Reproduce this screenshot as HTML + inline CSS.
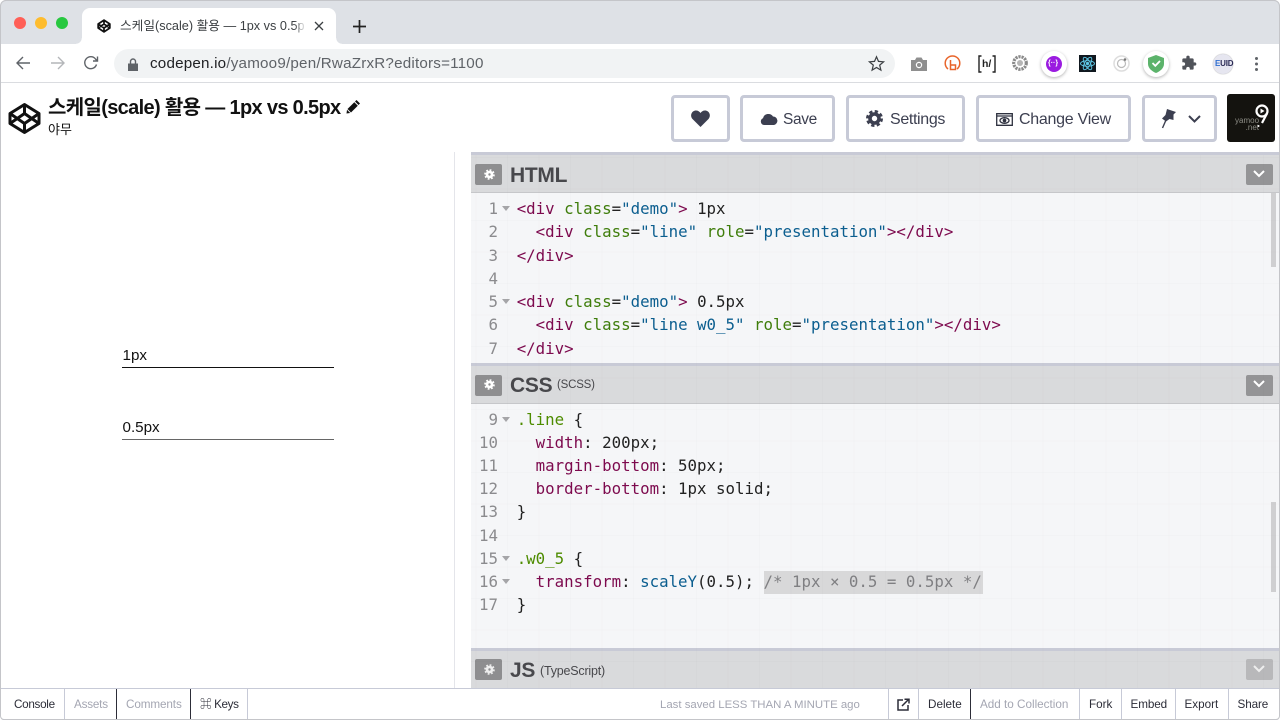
<!DOCTYPE html>
<html><head><meta charset="utf-8">
<style>
*{box-sizing:border-box}
html,body{margin:0;padding:0;width:1280px;height:720px;overflow:hidden;background:#fff}
body{font-family:"Liberation Sans","Noto Sans CJK KR",sans-serif;position:relative;color:#1c1c20}
.a{position:absolute;white-space:pre}
.ico{position:absolute;overflow:visible}
.btn{position:absolute;top:95px;height:47px;border:3px solid #c7cad7;border-radius:4px;background:#fff;color:#3c3f50;font-size:16px;line-height:43px}
.btn span{position:absolute;top:0;white-space:pre}
.ph{position:absolute;left:471px;width:809px;background:#d9dadc;border-top:3px solid #c8cad6;border-bottom:1px solid #c6c7ca}
.cb{position:absolute;left:471px;width:809px;background:#f5f6f8}
.gear{position:absolute;left:4px;width:27px;height:21px;background:#8e8e90;border-radius:2px}
.chev{position:absolute;left:775px;width:27px;height:21px;background:#949496;border-radius:2px}
.pt{position:absolute;left:39px;font-weight:bold;color:#48484c;font-size:21px;letter-spacing:-.3px}
.c{position:absolute;font-family:"DejaVu Sans Mono",monospace;font-size:15.77px;white-space:pre;line-height:23px;color:#222}
.n{color:#8b8b8e;position:absolute;text-align:right;width:28px;left:470px;font-family:"DejaVu Sans Mono",monospace;font-size:15.8px;line-height:23px}
.t{color:#7d0a4e}.g{color:#3f7d0b}.b{color:#0b5e8f}.l{color:#4e8c00}
.f{position:absolute;width:0;height:0;border-left:4px solid transparent;border-right:4px solid transparent;border-top:5px solid #a5a5a8;left:502px}
.ft{position:absolute;top:689px;height:32px;line-height:32px;font-size:11.7px;color:#2c2d38;white-space:pre}
.m{color:#a4a6b2}
.sep{position:absolute;top:689px;width:1px;height:31px;background:#c7cad7}
</style></head><body>

<!-- browser chrome -->
<div class="a" style="left:0;top:0;width:1280px;height:44px;background:#dee1e6;border-top:1px solid #b9babd"></div>
<div class="a" style="left:82px;top:8px;width:254px;height:36px;background:#fff;border-radius:8px 8px 0 0"></div>
<div class="a" style="left:76px;top:38px;width:6px;height:6px;background:radial-gradient(circle at 0 0,#dee1e6 5.500px,#fff 6px)"></div>
<div class="a" style="left:336px;top:38px;width:6px;height:6px;background:radial-gradient(circle at 100% 0,#dee1e6 5.500px,#fff 6px)"></div>
<div class="a" style="left:14px;top:17px;width:12px;height:12px;border-radius:50%;background:#ff5f57"></div>
<div class="a" style="left:35px;top:17px;width:12px;height:12px;border-radius:50%;background:#febc2e"></div>
<div class="a" style="left:56px;top:17px;width:12px;height:12px;border-radius:50%;background:#28c840"></div>
<svg class="ico" style="left:97px;top:19px" width="14" height="14" viewBox="0 0 24 24" fill="none" stroke="#111" stroke-width="3" stroke-linejoin="round"><path d="M12 2 22 8.500V15.500L12 22 2 15.500V8.500ZM12 2V8.500M12 15.500V22M2 8.500 12 15.500 22 8.500M2 15.500 12 8.500 22 15.500"/></svg>
<div class="a" style="left:120px;top:18px;width:186px;overflow:hidden;font-size:12.7px;line-height:16px;color:#3c4043">스케일(scale) 활용 — 1px vs 0.5p</div>
<div class="a" style="left:294px;top:18px;width:12px;height:16px;background:linear-gradient(90deg,rgba(255,255,255,0),#fff)"></div>
<svg class="ico" style="left:314px;top:21px" width="10" height="10" viewBox="0 0 10 10" stroke="#3c4043" stroke-width="1.300"><path d="M1 1 9 9M9 1 1 9"/></svg>
<svg class="ico" style="left:353px;top:20px" width="13" height="13" viewBox="0 0 13 13" stroke="#222" stroke-width="1.700"><path d="M6.500 0V13M0 6.500H13"/></svg>
<div class="a" style="left:0;top:44px;width:1280px;height:39px;background:#fff;border-bottom:1px solid #dadce0"></div>
<svg class="ico" style="left:15px;top:55px" width="16" height="16" viewBox="0 0 16 16" fill="none" stroke="#5f6368" stroke-width="1.400"><path d="M15 8H2M8 2 2 8 8 14"/></svg>
<svg class="ico" style="left:50px;top:55px" width="16" height="16" viewBox="0 0 16 16" fill="none" stroke="#b4b6b9" stroke-width="1.400"><path d="M1 8H14M8 2 14 8 8 14"/></svg>
<svg class="ico" style="left:83px;top:55px" width="16" height="16" viewBox="0 0 16 16" fill="none" stroke="#5f6368" stroke-width="1.400"><path d="M13.500 9.500A6 6 0 1 1 12.500 4L14.500 6M14.500 1.500V6H10"/></svg>
<div class="a" style="left:114px;top:49px;width:781px;height:29px;background:#f1f3f4;border-radius:15px"></div>
<svg class="ico" style="left:128px;top:58px" width="10" height="13" viewBox="0 0 10 13"><path d="M0 5.500H10V13H0Z" fill="#5f6368"/><path d="M2.500 6V3.500A2.500 2.500 0 0 1 7.500 3.500V6" fill="none" stroke="#5f6368" stroke-width="1.400"/></svg>
<div class="a" style="left:150px;top:55px;font-size:15.2px;line-height:18px;color:#5f6368;letter-spacing:.2px"><span style="color:#202124">codepen.io</span>/yamoo9/pen/RwaZrxR?editors=1100</div>
<svg class="ico" style="left:868px;top:55px" width="17" height="17" viewBox="0 0 24 24" fill="none" stroke="#3c4043" stroke-width="1.700"><path d="M12 2.500 14.800 9 22 9.600 16.500 14.300 18.200 21.400 12 17.600 5.800 21.400 7.500 14.300 2 9.600 9.200 9Z"/></svg>

<!-- extensions -->
<svg class="ico" style="left:911px;top:57px" width="16" height="14" viewBox="0 0 16 14"><path d="M0 3H4L5.500 .500H10.500L12 3H16V14H0Z" fill="#8f8f8f"/><circle cx="8" cy="8" r="3.200" fill="#fff"/><circle cx="8" cy="8" r="2" fill="#8f8f8f"/></svg>
<svg class="ico" style="left:944px;top:55px" width="17" height="17" viewBox="0 0 17 17" fill="none" stroke="#e8642a" stroke-width="1.500"><path d="M4 14A7.300 7.300 0 1 1 13 14"/><path d="M6.500 5V14.500H11.500V10H6.500"/></svg>
<svg class="ico" style="left:978px;top:55px" width="18" height="18" viewBox="0 0 18 18" fill="none" stroke="#222" stroke-width="1.400"><path d="M3.500 1H1V17H3.500M14.500 1H17V17H14.500"/></svg>
<div class="a" style="left:982px;top:58px;font-size:10.500px;font-weight:bold;line-height:12px;color:#222">h/</div>
<svg class="ico" style="left:1012px;top:55px" width="16" height="16" viewBox="0 0 16 16"><circle cx="8" cy="8" r="6.300" fill="none" stroke="#8a8a8a" stroke-width="3.200" stroke-dasharray="2.200 .9"/><circle cx="8" cy="8" r="3" fill="#b5b5b5"/></svg>
<div class="a" style="left:1041px;top:51px;width:26px;height:26px;border-radius:50%;background:#fff;box-shadow:0 1px 3px rgba(0,0,0,.3)"></div>
<div class="a" style="left:1046px;top:56px;width:16px;height:16px;border-radius:50%;background:#9a1be0"></div>
<div class="a" style="left:1048px;top:59px;font-size:7px;line-height:9px;font-weight:bold;color:#fff">{··}</div>
<div class="a" style="left:1079px;top:55px;width:17px;height:17px;background:#10181f"></div>
<svg class="ico" style="left:1079px;top:55px" width="17" height="17" viewBox="0 0 17 17" fill="none" stroke="#5fc8e6" stroke-width=".9"><ellipse cx="8.500" cy="8.500" rx="7" ry="2.800"/><ellipse cx="8.500" cy="8.500" rx="7" ry="2.800" transform="rotate(60 8.500 8.500)"/><ellipse cx="8.500" cy="8.500" rx="7" ry="2.800" transform="rotate(120 8.500 8.500)"/><circle cx="8.500" cy="8.500" r="1.200" fill="#5fc8e6"/></svg>
<svg class="ico" style="left:1113px;top:55px" width="17" height="17" viewBox="0 0 17 17" fill="none"><circle cx="8.500" cy="8.500" r="7.500" stroke="#ddd" stroke-width="1.500"/><circle cx="8.500" cy="8.500" r="4" stroke="#bbb" stroke-width="1.200"/><circle cx="12" cy="4.500" r="1.300" fill="#777"/></svg>
<div class="a" style="left:1143px;top:51px;width:26px;height:26px;border-radius:50%;background:#fff;box-shadow:0 1px 3px rgba(0,0,0,.3)"></div>
<svg class="ico" style="left:1148px;top:55px" width="16" height="18" viewBox="0 0 16 18"><path d="M8 0 16 3V9C16 13 12 16.500 8 18 4 16.500 0 13 0 9V3Z" fill="#5cb36b"/><path d="M4.500 8 7.300 10.800 12 6" fill="none" stroke="#fff" stroke-width="1.800"/></svg>
<svg class="ico" style="left:1181px;top:55px" width="16" height="16" viewBox="0 0 24 24"><path d="M20.500 11H19V7A2 2 0 0 0 17 5H13V3.500A2.500 2.500 0 0 0 8 3.500V5H4A2 2 0 0 0 2 7V10.800H3.500A2.700 2.700 0 0 1 3.500 16.200H2V20A2 2 0 0 0 4 22H7.800V20.500A2.700 2.700 0 0 1 13.200 20.500V22H17A2 2 0 0 0 19 20V16H20.500A2.500 2.500 0 0 0 20.500 11Z" fill="#50535a"/></svg>
<div class="a" style="left:1213px;top:54px;width:20px;height:20px;border-radius:50%;background:#e6e6f0;box-shadow:0 0 1px #888"></div>
<div class="a" style="left:1215px;top:58px;font-size:8px;font-weight:bold;line-height:12px;color:#2a2a55;letter-spacing:-.2px"><span style="color:#2f6fd0">E</span>UID</div>
<div class="a" style="left:1255px;top:57px;width:3px;height:3px;border-radius:50%;background:#5f6368;box-shadow:0 5.500px 0 #5f6368,0 11px 0 #5f6368"></div>

<!-- pen header -->
<svg class="ico" style="left:8px;top:102px" width="33" height="33" viewBox="0 0 33 33" fill="none" stroke="#111" stroke-width="3" stroke-linejoin="round"><path d="M16.500 2.500 31 11.500V21.500L16.500 30.500 2 21.500V11.500ZM16.500 2.500V11.500M16.500 21.500V30.500M2 11.500 16.500 21.500 31 11.500M2 21.500 16.500 11.500 31 21.500"/></svg>
<div class="a" style="left:48px;top:95px;font-size:20px;font-weight:bold;line-height:26px;color:#111;letter-spacing:-.66px">스케일(scale) 활용 — 1px vs 0.5px</div>
<svg class="ico" style="left:346px;top:99px" width="15" height="15" viewBox="0 0 15 15"><path d="M10.500 1 14 4.500 12.500 6 9 2.500Z" fill="#111"/><path d="M8.300 3.200 11.800 6.700 5 13.500 1.500 10Z" fill="#111"/><path d="M1 10.800 4.200 14 .5 14.500Z" fill="#111"/></svg>
<div class="a" style="left:48px;top:121px;font-size:13px;line-height:17px;color:#111">야무</div>

<div class="btn" style="left:671px;width:59px"></div>
<svg class="ico" style="left:691px;top:110px" width="19" height="17" viewBox="0 0 19 17"><path d="M9.500 17 1.500 9C-1.500 5.500 .800 .500 5 .500 7 .500 8.500 1.500 9.500 3 10.500 1.500 12 .500 14 .500 18.200 .500 20.500 5.500 17.500 9Z" fill="#3c3f50"/></svg>
<div class="btn" style="left:740px;width:95px"><span style="left:40px;font-size:15.500px;letter-spacing:-.35px">Save</span></div>
<svg class="ico" style="left:760px;top:113px" width="18" height="12" viewBox="0 0 18 12"><path d="M4 12A3.500 3.500 0 0 1 3 5.300 5.500 5.500 0 0 1 13 3.500 4.300 4.300 0 0 1 14 12Z" fill="#3c3f50"/></svg>
<div class="btn" style="left:846px;width:119px"><span style="left:41px;letter-spacing:-.35px">Settings</span></div>
<svg class="ico" style="left:866px;top:110px" width="17" height="17" viewBox="0 0 17 17"><circle cx="8.500" cy="8.500" r="4.500" fill="none" stroke="#3c3f50" stroke-width="3.600"/><circle cx="8.500" cy="8.500" r="7" fill="none" stroke="#3c3f50" stroke-width="3" stroke-dasharray="3.200 2.300"/></svg>
<div class="btn" style="left:976px;width:155px"><span style="left:40px;letter-spacing:-.27px">Change View</span></div>
<svg class="ico" style="left:996px;top:113px" width="17" height="13" viewBox="0 0 17 13" fill="none" stroke="#2f3240" stroke-width="1.300"><path d="M.700 .700H16.300V12.300H.700ZM.700 3H16.300"/><ellipse cx="8.500" cy="7.500" rx="4.500" ry="2.800"/><circle cx="8.500" cy="7.500" r="1.200" fill="#2f3240"/></svg>
<div class="btn" style="left:1142px;width:75px"></div>
<svg class="ico" style="left:1161px;top:109px" width="16" height="20" viewBox="0 0 16 20"><path d="M6 0 15 3 12.500 5.500 12.500 11 8.500 10 5 12.500 1 9.500 4.500 6Z" fill="#3c3f50"/><path d="M5 11 1.500 19" stroke="#3c3f50" stroke-width="1.400"/></svg>
<svg class="ico" style="left:1188px;top:115px" width="13" height="8" viewBox="0 0 13 8" fill="none" stroke="#3c3f50" stroke-width="2"><path d="M1 1 6.500 6.500 12 1"/></svg>
<div class="a" style="left:1227px;top:94px;width:48px;height:48px;background:#14130f;border-radius:3px;overflow:hidden"></div>
<div class="a" style="left:1235px;top:118px;font-size:8px;line-height:6.500px;color:#8d8d86;text-align:right">yamoo
    .net</div>
<svg class="ico" style="left:1255px;top:104px" width="14" height="24" viewBox="0 0 14 24" fill="none" stroke="#fff" stroke-width="2.200"><circle cx="7" cy="7" r="5.500"/><path d="M12 9.500 7 19"/><path d="M5.500 4.500 9.500 7 5.500 9.500Z" fill="#fff" stroke="none"/><circle cx="3.500" cy="22" r="1" fill="#fff" stroke="none"/></svg>

<!-- preview -->
<div class="a" style="left:122.500px;top:347px;font-size:15.200px;line-height:18px;color:#111">1px</div>
<div class="a" style="left:122px;top:367px;width:212px;height:1px;background:#111"></div>
<div class="a" style="left:122.500px;top:419px;font-size:15.200px;line-height:18px;color:#111">0.5px</div>
<div class="a" style="left:122px;top:439px;width:212px;height:1px;background:#666"></div>

<div class="a" style="left:454px;top:152px;width:1px;height:537px;background:#e4e5ea"></div>

<!-- HTML editor -->
<div class="ph" style="top:152px;height:41px"><div class="gear" style="top:9px"></div><div class="pt" style="top:8px;line-height:25px">HTML</div><div class="chev" style="top:9px"></div></div>
<div class="cb" style="top:193px;height:171px"></div>
<div class="a" style="left:1271px;top:193px;width:5px;height:74px;background:#cfcfd1"></div>

<div class="n" style="top:197px">1</div><div class="f" style="top:206px"></div>
<div class="c" style="left:516.700px;top:197px"><span class="t">&lt;div</span> <span class="g">class</span>=<span class="b">"demo"</span><span class="t">&gt;</span> 1px</div>
<div class="n" style="top:220px">2</div>
<div class="c" style="left:516.700px;top:220px">  <span class="t">&lt;div</span> <span class="g">class</span>=<span class="b">"line"</span> <span class="g">role</span>=<span class="b">"presentation"</span><span class="t">&gt;&lt;/div&gt;</span></div>
<div class="n" style="top:244px">3</div>
<div class="c" style="left:516.700px;top:244px"><span class="t">&lt;/div&gt;</span></div>
<div class="n" style="top:267px">4</div>
<div class="n" style="top:290px">5</div><div class="f" style="top:299px"></div>
<div class="c" style="left:516.700px;top:290px"><span class="t">&lt;div</span> <span class="g">class</span>=<span class="b">"demo"</span><span class="t">&gt;</span> 0.5px</div>
<div class="n" style="top:313px">6</div>
<div class="c" style="left:516.700px;top:313px">  <span class="t">&lt;div</span> <span class="g">class</span>=<span class="b">"line w0_5"</span> <span class="g">role</span>=<span class="b">"presentation"</span><span class="t">&gt;&lt;/div&gt;</span></div>
<div class="n" style="top:337px">7</div>
<div class="c" style="left:516.700px;top:337px"><span class="t">&lt;/div&gt;</span></div>

<!-- CSS editor -->
<div class="ph" style="top:363px;height:41px"><div class="gear" style="top:9px"></div><div class="pt" style="top:7px;line-height:25px">CSS</div><div class="a" style="left:86px;top:10px;font-size:11.500px;line-height:18px;color:#48484c;letter-spacing:-.2px">(SCSS)</div><div class="chev" style="top:9px"></div></div>
<div class="cb" style="top:404px;height:244px"></div>
<div class="a" style="left:1271px;top:502px;width:5px;height:90px;background:#cfcfd1"></div>

<div class="n" style="top:408px">9</div><div class="f" style="top:417px"></div>
<div class="c" style="left:516.700px;top:408px"><span class="l">.line</span> {</div>
<div class="n" style="top:431px">10</div>
<div class="c" style="left:516.700px;top:431px">  <span class="t">width</span>: 200px;</div>
<div class="n" style="top:454px">11</div>
<div class="c" style="left:516.700px;top:454px">  <span class="t">margin-bottom</span>: 50px;</div>
<div class="n" style="top:477px">12</div>
<div class="c" style="left:516.700px;top:477px">  <span class="t">border-bottom</span>: 1px solid;</div>
<div class="n" style="top:500px">13</div>
<div class="c" style="left:516.700px;top:500px">}</div>
<div class="n" style="top:524px">14</div>
<div class="n" style="top:547px">15</div><div class="f" style="top:556px"></div>
<div class="c" style="left:516.700px;top:547px"><span class="l">.w0_5</span> {</div>
<div class="n" style="top:570px">16</div><div class="f" style="top:579px"></div>
<div class="a" style="left:764px;top:571px;width:219px;height:23px;background:#d8d8d9"></div>
<div class="c" style="left:516.700px;top:570px">  <span class="t">transform</span>: <span class="b">scaleY</span>(0.5); <span style="color:#7f7f82">/* 1px × 0.5 = 0.5px */</span></div>
<div class="n" style="top:593px">17</div>
<div class="c" style="left:516.700px;top:593px">}</div>

<!-- JS editor -->
<div class="ph" style="top:648px;height:41px;border-bottom:0"><div class="gear" style="top:8px"></div><div class="pt" style="top:7px;line-height:25px">JS</div><div class="a" style="left:69px;top:11px;font-size:12.500px;line-height:18px;color:#48484c;letter-spacing:-.2px">(TypeScript)</div><div class="chev" style="top:8px;background:#b8b8ba"></div></div>

<!-- faint editor grid -->
<div class="a" style="left:471px;top:155px;width:809px;height:533px;background-image:linear-gradient(90deg,rgba(0,0,0,.012) 1px,transparent 1px),linear-gradient(rgba(0,0,0,.012) 1px,transparent 1px);background-size:31.500px 31.500px;background-position:4.500px 2px"></div>

<!-- footer -->
<div class="a" style="left:0;top:688px;width:1280px;height:32px;background:#fff;border-top:1px solid #c7cad7;border-bottom:1px solid #b8b9c0"></div>
<div class="ft" style="left:14px;letter-spacing:-.3px">Console</div>
<div class="sep" style="left:64px"></div>
<div class="ft m" style="left:74px;letter-spacing:-.2px">Assets</div>
<div class="sep" style="left:116px;background:#2c2d38"></div>
<div class="ft m" style="left:126px;letter-spacing:-.1px">Comments</div>
<div class="sep" style="left:190px;background:#2c2d38"></div>
<div class="ft" style="left:200px;letter-spacing:-.4px">⌘ Keys</div>
<div class="sep" style="left:247px"></div>
<div class="ft m" style="left:660px;font-size:11.400px">Last saved LESS THAN A MINUTE ago</div>
<div class="sep" style="left:888px"></div>
<svg class="ico" style="left:897px;top:698px" width="13" height="13" viewBox="0 0 13 13" fill="none" stroke="#2c2d38" stroke-width="1.500"><path d="M6 2H1V12H11V7"/><path d="M5 8 11 2M7.500 1.200H12V5.500"/></svg>
<div class="sep" style="left:918px"></div>
<div class="ft" style="left:928px">Delete</div>
<div class="sep" style="left:970px;background:#2c2d38"></div>
<div class="ft m" style="left:980px">Add to Collection</div>
<div class="sep" style="left:1079px"></div>
<div class="ft" style="left:1089px">Fork</div>
<div class="sep" style="left:1121px"></div>
<div class="ft" style="left:1130.500px;letter-spacing:-.1px">Embed</div>
<div class="sep" style="left:1175px"></div>
<div class="ft" style="left:1184.500px">Export</div>
<div class="sep" style="left:1228px"></div>
<div class="ft" style="left:1237.500px;letter-spacing:-.1px">Share</div>

<!-- gear + chevron glyphs -->
<svg class="ico" style="left:484px;top:169px" width="11" height="11" viewBox="0 0 11 11"><circle cx="5.500" cy="5.500" r="3.900" fill="#fff"/><circle cx="5.500" cy="5.500" r="4.500" fill="none" stroke="#fff" stroke-width="1.600" stroke-dasharray="1.800 1.730"/><circle cx="5.500" cy="5.500" r="1.200" fill="#8e8e90"/></svg>
<svg class="ico" style="left:484px;top:379px" width="11" height="11" viewBox="0 0 11 11"><circle cx="5.500" cy="5.500" r="3.900" fill="#fff"/><circle cx="5.500" cy="5.500" r="4.500" fill="none" stroke="#fff" stroke-width="1.600" stroke-dasharray="1.800 1.730"/><circle cx="5.500" cy="5.500" r="1.200" fill="#8e8e90"/></svg>
<svg class="ico" style="left:484px;top:664px" width="11" height="11" viewBox="0 0 11 11"><circle cx="5.500" cy="5.500" r="3.900" fill="#eee"/><circle cx="5.500" cy="5.500" r="4.500" fill="none" stroke="#eee" stroke-width="1.600" stroke-dasharray="1.800 1.730"/><circle cx="5.500" cy="5.500" r="1.200" fill="#8e8e90"/></svg>
<svg class="ico" style="left:1253px;top:170px" width="12" height="8" viewBox="0 0 12 8" fill="none" stroke="#fff" stroke-width="2"><path d="M1 1 6 6 11 1"/></svg>
<svg class="ico" style="left:1253px;top:380px" width="12" height="8" viewBox="0 0 12 8" fill="none" stroke="#fff" stroke-width="2"><path d="M1 1 6 6 11 1"/></svg>
<svg class="ico" style="left:1253px;top:665px" width="12" height="8" viewBox="0 0 12 8" fill="none" stroke="#eee" stroke-width="2"><path d="M1 1 6 6 11 1"/></svg>

<!-- window frame -->
<div class="a" style="left:0;top:0;width:1280px;height:720px;border:1px solid #c4c5c9;border-radius:6px 6px 4px 4px;box-shadow:0 0 0 6px #fff"></div>
</body></html>
